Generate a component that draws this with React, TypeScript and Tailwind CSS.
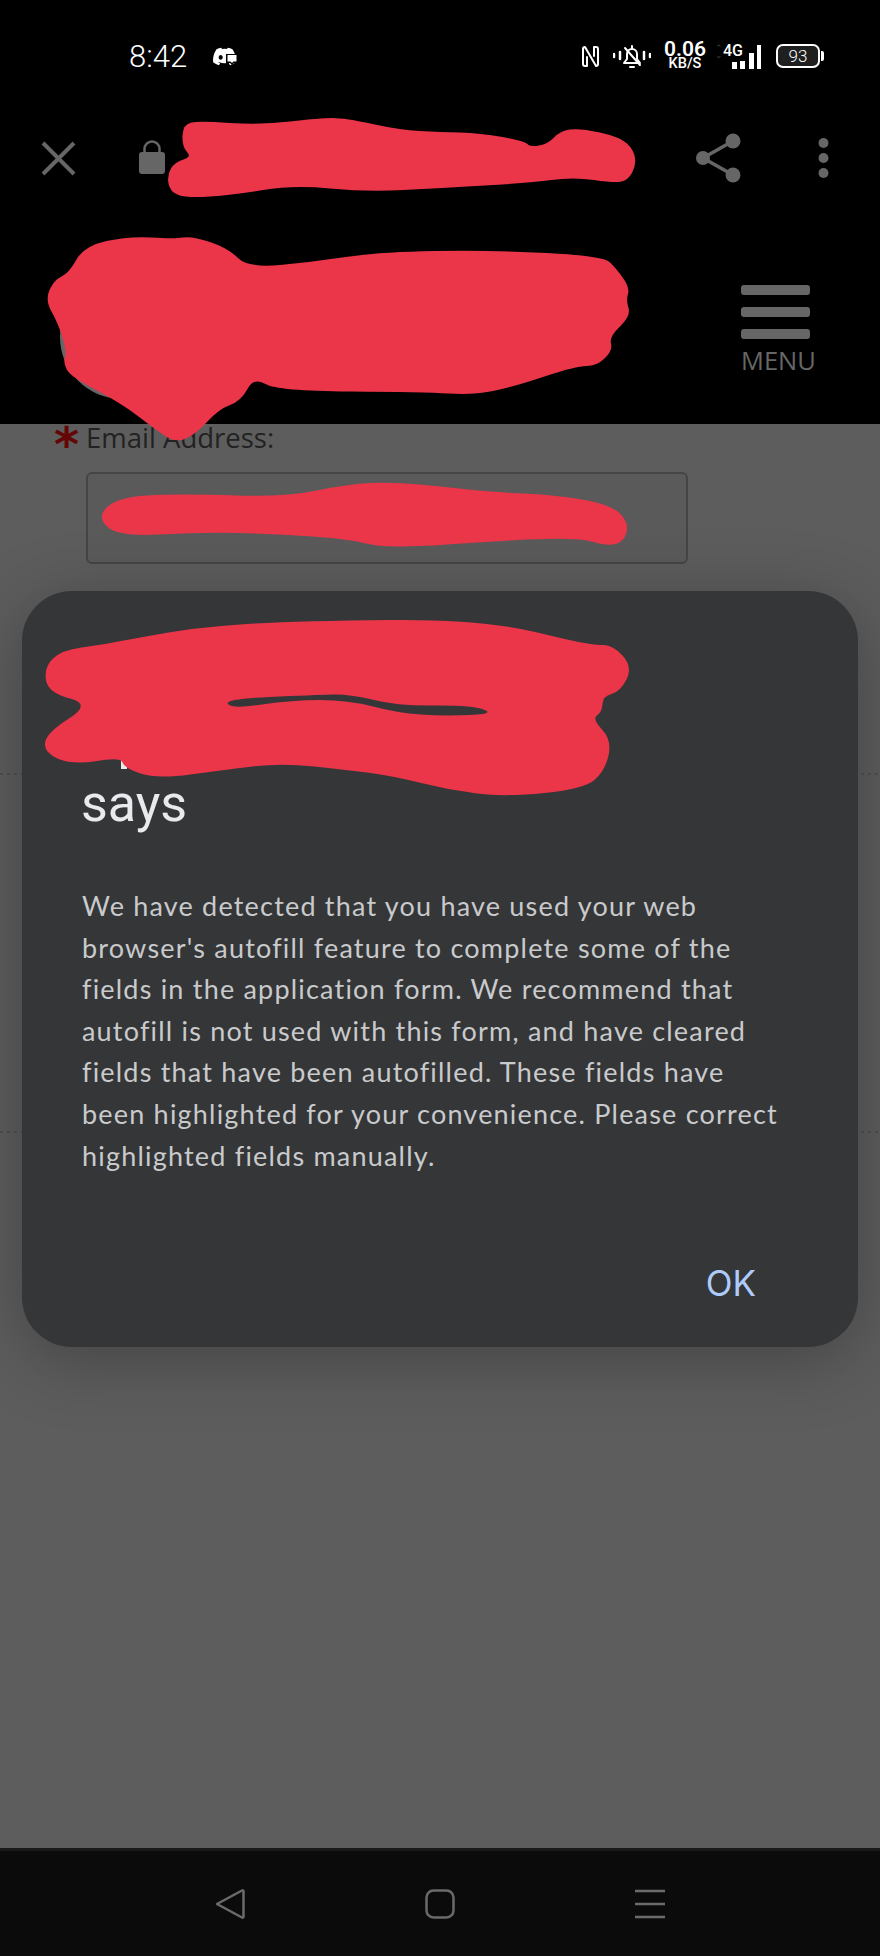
import { FaDiscord } from "react-icons/fa";

const RED = "#eb3549";

type Pt = [number, number];

// smooths a hand-traced outline through the midpoints of its points
const blob = (pts: Pt[]) => {
  const mid = (a: Pt, b: Pt): Pt => [(a[0] + b[0]) / 2, (a[1] + b[1]) / 2];
  const start = mid(pts[pts.length - 1], pts[0]);
  let d = `M${start[0]} ${start[1]}`;
  pts.forEach((p, i) => {
    const m = mid(p, pts[(i + 1) % pts.length]);
    d += ` Q${p[0]} ${p[1]} ${m[0]} ${m[1]}`;
  });
  return d + " Z";
};

const toolbarScribble: Pt[] = [
  [183, 124], [200, 121], [260, 125], [320, 118], [345, 118], [400, 130], [440, 132], [480, 133], [525, 141],
  [530, 147], [548, 144], [560, 131], [580, 128], [620, 137], [634, 150], [636, 166], [628, 180], [615, 183],
  [573, 177], [530, 183], [440, 188], [367, 192], [293, 185], [233, 195], [187, 198], [170, 192], [167, 175],
  [175, 162], [192, 157], [182, 147],
];
const headerScribble: Pt[] = [
  [129, 236], [174, 239], [192, 236], [228, 248], [248, 268], [312, 262], [379, 252], [491, 250], [603, 256],
  [616, 268], [630, 288], [626, 300], [631, 316], [609, 337], [613, 350], [597, 366], [576, 366], [513, 387],
  [473, 395], [424, 392], [277, 391], [254, 377], [241, 401], [219, 409], [196, 434], [176, 443], [156, 430],
  [121, 403], [71, 377], [63, 363], [67, 352], [58, 323], [45, 300], [54, 280], [69, 273], [84, 246],
];
const inputScribble: Pt[] = [
  [121, 496], [188, 494], [286, 497], [348, 484], [393, 482], [446, 487], [491, 492], [558, 495], [612, 505],
  [629, 523], [624, 542], [607, 546], [580, 538], [509, 540], [429, 546], [379, 547], [348, 539], [277, 534],
  [201, 532], [118, 537], [96, 516],
];
const dialogScribble: Pt[] = [
  [44, 667], [62, 650], [101, 645], [196, 627], [297, 621], [483, 619], [592, 646], [612, 644], [633, 667],
  [620, 692], [603, 696], [602, 712], [592, 719], [612, 740], [605, 771], [584, 789], [505, 797], [449, 790],
  [393, 776], [348, 770], [281, 763], [224, 770], [157, 779], [124, 768], [121, 757], [73, 765], [44, 753],
  [46, 733], [92, 704], [48, 693],
];
const dialogHole: Pt[] = [
  [224, 699], [314, 695], [350, 694], [398, 706], [471, 705], [496, 714], [443, 716], [398, 713], [348, 700],
  [292, 700], [232, 709],
];

const Redactions = () => (
  <svg className="absolute inset-0 z-20 pointer-events-none" width="880" height="1956" viewBox="0 0 880 1956">
    <path d="M121 755h6v14h-6z" fill="#e8eaed" />
    <path d={blob(toolbarScribble)} fill={RED} />
    <path d={blob(headerScribble)} fill={RED} />
    <path d={blob(inputScribble)} fill={RED} />
    <path d={blob(dialogScribble) + " " + blob(dialogHole)} fill={RED} fillRule="evenodd" />
  </svg>
);

const StatusBar = () => (
  <div className="h-[112px] flex items-center justify-between pl-[129px] pr-[56px] bg-black text-white font-['Roboto',sans-serif]">
    <div className="flex items-center gap-[25px]">
      <span className="text-[31px] leading-none font-light">8:42</span>
      <div className="relative w-[25px] h-[24px]">
        <FaDiscord className="w-[25px] h-[25px] text-white" />
        <svg className="absolute left-[14px] top-[10px]" width="12" height="11" viewBox="0 0 12 11">
          <path d="M0 0h12v9H8l-2 2-2-2H0z" fill="#000" />
          <path d="M1.500 1h9v6.500H7.500L6 9 4.500 7.500h-3z" fill="#fff" />
        </svg>
      </div>
    </div>
    <div className="flex items-center">
      <svg width="19" height="23" viewBox="0 0 19 23" fill="none" stroke="#fff" strokeWidth="2" strokeLinecap="round" strokeLinejoin="round">
        <path d="M6 12 V21 H4 Q2 21 2 19 V4 Q2 2 4 2 L15 21 Q17 21 17 19 V4 Q17 2 15 2 H13 V11" />
      </svg>
      <svg className="ml-[13px]" width="38" height="25" viewBox="0 0 38 25" fill="none" stroke="#fff" strokeWidth="2" strokeLinecap="round" strokeLinejoin="round">
        <path d="M1 10v3M7 8v7M31 8v7M37 10v3" strokeWidth="2.5" />
        <path d="M11 19h16l-3-4v-5a5 5 0 0 0-10 0v5z" />
        <path d="M19 2v2M17 23h4M12 4l15 17" />
      </svg>
      <div className="ml-[13px] w-[42px] flex flex-col items-center font-medium">
        <span className="text-[21px] leading-[16px] font-semibold">0.06</span>
        <span className="text-[14.5px] leading-[14px]">KB/S</span>
      </div>
      <div className="relative ml-[9px] w-[46px] h-[25px] flex items-end justify-end gap-[3.5px]">
        <span className="absolute left-0 top-[1px] text-[9px] leading-[7px] text-[#444]">⌃<br />⌄</span>
        <span className="absolute left-[8px] top-0 text-[16px] leading-[13px] font-medium">4G</span>
        <div className="w-[5px] h-[7px] bg-white" />
        <div className="w-[5px] h-[8px] bg-white" />
        <div className="w-[5px] h-[16px] bg-white" />
        <div className="w-[4px] h-[24px] bg-white" />
      </div>
      <div className="ml-[15px] flex items-center">
        <div className="w-[44px] h-[24px] rounded-[7px] border-2 border-white bg-[#1f1f1f] flex items-center justify-center text-[17px] leading-none font-light">93</div>
        <div className="ml-[1px] w-[3px] h-[10px] rounded-r-[2px] bg-white" />
      </div>
    </div>
  </div>
);

const Toolbar = () => (
  <div className="h-[92px] flex items-center pl-[41px] pr-[51px] bg-black">
    <svg width="35" height="35" viewBox="0 0 35 35" stroke="#666" strokeWidth="4">
      <path d="M2 2 33 33M33 2 2 33" />
    </svg>
    <svg className="ml-[62px]" width="28" height="36" viewBox="0 0 28 36" fill="#666">
      <path d="M6.500 13V9a7.500 7.500 0 0 1 15 0v4" fill="none" stroke="#666" strokeWidth="2.500" />
      <rect x="1" y="12" width="26" height="22" rx="3" />
    </svg>
    <div className="flex-1" />
    <svg width="46" height="50" viewBox="0 0 46 50" fill="#666">
      <path d="M37 8 7 25l30 17" fill="none" stroke="#666" strokeWidth="3.500" />
      <circle cx="37" cy="8" r="7.500" />
      <circle cx="7" cy="25" r="7" />
      <circle cx="37" cy="42" r="7.500" />
    </svg>
    <svg className="ml-[76px]" width="11" height="42" viewBox="0 0 11 42" fill="#666">
      <circle cx="5.500" cy="6" r="5" />
      <circle cx="5.500" cy="21" r="5" />
      <circle cx="5.500" cy="36" r="5" />
    </svg>
  </div>
);

const SiteHeader = () => (
  <div className="relative h-[220px] overflow-hidden bg-black flex justify-end pr-[65px] pt-[81px]">
    <div className="absolute left-[60px] top-[71px] w-[124px] h-[124px] rounded-full bg-[#666]" />
    <div className="w-[74px] flex flex-col gap-[12px] font-['Open_Sans',sans-serif]">
      <div className="w-[69px] h-[10px] rounded-[3px] bg-[#666]" />
      <div className="w-[69px] h-[10px] rounded-[3px] bg-[#666]" />
      <div className="w-[69px] h-[10px] rounded-[3px] bg-[#666]" />
      <span className="-mt-[7px] text-[25.5px] leading-[32px] text-[#666]">MENU</span>
    </div>
  </div>
);

const DottedRule = () => (
  <div className="h-[2px] bg-[repeating-linear-gradient(90deg,#4f4f4f_0_3px,transparent_3px_7px)]" />
);

const PageForm = () => (
  <div className="flex-1 bg-[#5d5d5d] font-['Open_Sans',sans-serif]">
    <div className="h-[349px]">
      <div className="flex pl-[54px] h-[48px]">
        <span className="w-[32px] h-[34px] text-[48px] leading-[40px] font-bold text-[#640606] font-['DejaVu_Sans',sans-serif]">*</span>
        <span className="text-[27.5px] leading-[28px] text-[#222]">Email Address:</span>
      </div>
      <div className="ml-[86px] w-[602px] h-[92px] rounded-[6px] border-2 border-[#454545] bg-[#5a5a5a]" />
    </div>
    <DottedRule />
    <div className="h-[356px]" />
    <DottedRule />
  </div>
);

const AutofillDialog = () => (
  <div className="absolute left-[22px] top-[591px] z-10 w-[836px] h-[756px] rounded-[50px] bg-[#353638] shadow-[0_12px_70px_rgba(0,0,0,0.28)] pt-[182px] pl-[59px] pr-[30px] flex flex-col">
    <div className="text-[52px] leading-[62px] text-[#e8eaed] font-['Roboto',sans-serif]">says</div>
    <p className="mt-[50px] ml-[1px] text-[27px] leading-[41.6px] tracking-[1.2px] text-[#c9cacc] font-['Lato',sans-serif]">
      We have detected that you have used your web
      <br />
      browser's autofill feature to complete some of the
      <br />
      fields in the application form. We recommend that
      <br />
      autofill is not used with this form, and have cleared
      <br />
      fields that have been autofilled. These fields have
      <br />
      been highlighted for your convenience. Please correct
      <br />
      highlighted fields manually.
    </p>
    <div className="mt-[85px] flex justify-end pr-[72px]">
      <span className="text-[35px] leading-[44px] text-[#aecbfa] font-['Inter',sans-serif]">OK</span>
    </div>
  </div>
);

const NavBar = () => (
  <div className="h-[108px] border-t-[3px] border-[#1a1a1a] bg-[#0b0b0b] flex items-center justify-center gap-[180px]">
    <svg width="30" height="30" viewBox="0 0 30 30" fill="none" stroke="#6b6b6b" strokeWidth="2.5" strokeLinejoin="round">
      <path d="M2 15 27 1.500a1 1 0 0 1 1.500 1V27.500a1 1 0 0 1-1.500 1z" />
    </svg>
    <svg width="30" height="30" viewBox="0 0 30 30" fill="none" stroke="#6b6b6b" strokeWidth="2.5">
      <rect x="1.500" y="1.500" width="27" height="27" rx="7" />
    </svg>
    <svg width="30" height="30" viewBox="0 0 30 30" fill="none" stroke="#6b6b6b" strokeWidth="2.5">
      <path d="M0 2h30M0 15h30M0 28h30" />
    </svg>
  </div>
);

export default function App() {
  return (
    <div className="relative w-[880px] h-[1956px] overflow-hidden flex flex-col bg-black">
      <StatusBar />
      <Toolbar />
      <SiteHeader />
      <PageForm />
      <NavBar />
      <AutofillDialog />
      <Redactions />
    </div>
  );
}
